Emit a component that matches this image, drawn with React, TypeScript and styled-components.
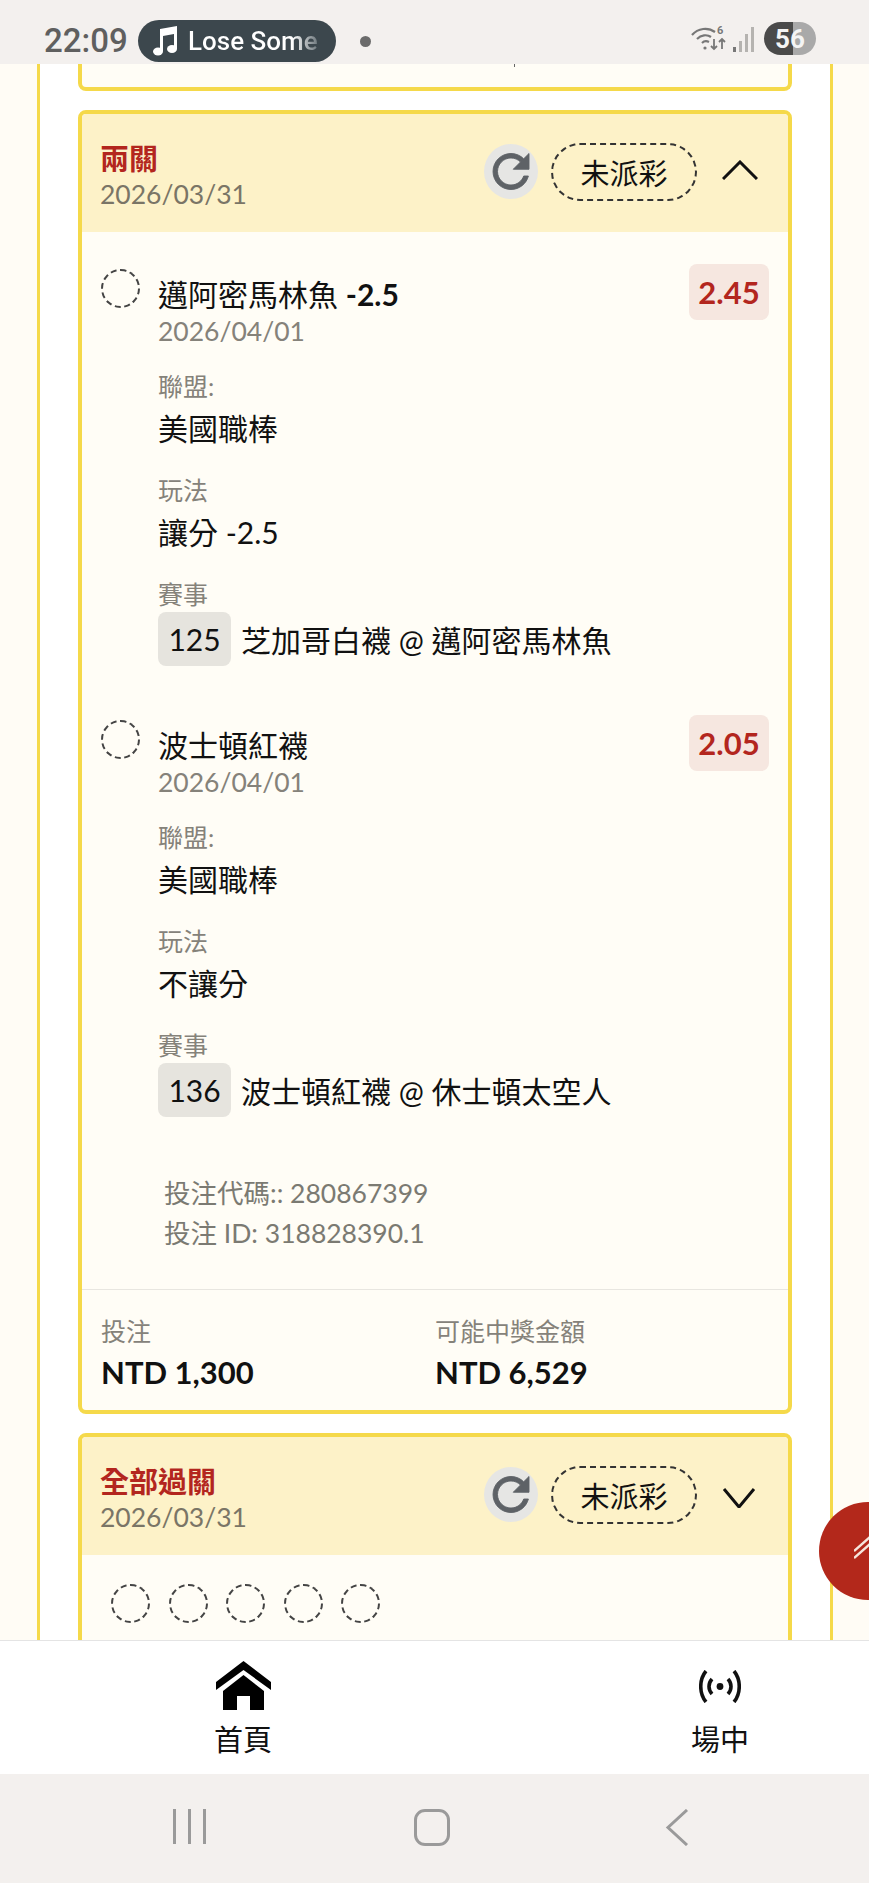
import styled, { createGlobalStyle } from "styled-components";

const GlobalStyle = createGlobalStyle`
    html, body {
        margin: 0;
        padding: 0;
        background: #fffcf5;
        font-family: Lato, "Noto Sans CJK TC", sans-serif;
    }
    * {
        box-sizing: border-box;
    }
`;

const Screen = styled.div`
    position: relative;
    width: 869px;
    height: 1883px;
    display: flex;
    flex-direction: column;
    overflow: hidden;
    background: #fffcf5;
`;

// Phone status bar
const StatusBar = styled.div`
    height: 64px;
    flex: none;
    display: flex;
    align-items: flex-start;
    padding: 20px 53px 0 44px;
    background: #f3f0ee;
`;

const Clock = styled.div`
    width: 94px;
    font-family: Roboto, sans-serif;
    font-size: 33px;
    font-weight: 500;
    line-height: 42px;
    color: #5f5f5f;
`;

const MediaPill = styled.div`
    width: 198px;
    height: 42px;
    display: flex;
    align-items: center;
    gap: 11px;
    padding-left: 15px;
    border-radius: 21px;
    background: #3c474d;
`;

const MediaText = styled.span`
    font-family: Roboto, sans-serif;
    font-size: 26px;
    font-weight: 500;
    background: linear-gradient(90deg, #ffffff 80%, #6d777c 100%);
    -webkit-background-clip: text;
    background-clip: text;
    color: transparent;
`;

const StatusDot = styled.div`
    width: 11px;
    height: 11px;
    margin: 16px 0 0 24px;
    border-radius: 50%;
    background: #6b6b6b;
`;

const StatusRight = styled.div`
    margin-left: auto;
    height: 37px;
    display: flex;
    align-items: center;
    gap: 7px;
`;

const Battery = styled.div`
    width: 52px;
    height: 33px;
    display: flex;
    align-items: center;
    justify-content: center;
    border-radius: 17px;
    background: linear-gradient(90deg, #4a4a4a 56%, #a9a9a9 56%);
    color: #f4f4f4;
    font-family: Roboto, sans-serif;
    font-size: 26px;
    font-weight: 700;
`;

// Scrolling page area
const Content = styled.div`
    flex: 1;
    min-height: 0;
    overflow: hidden;
    padding: 0 36px 0 37px;
`;

const OuterPanel = styled.div`
    min-height: 100%;
    display: flex;
    flex-direction: column;
    gap: 19px;
    padding: 0 38px;
    border-left: 3px solid #f5d94a;
    border-right: 3px solid #f5d94a;
    background: #ffffff;
`;

const CardStub = styled.div`
    height: 27px;
    padding-left: 432px;
    border: 4px solid #f5d94a;
    border-top: none;
    border-radius: 0 0 8px 8px;
    background: #fffdf6;
`;

const StubTick = styled.div`
    width: 1px;
    height: 3px;
    background: #666;
`;

const Card = styled.div`
    border: 4px solid #f5d94a;
    border-radius: 8px;
    background: #fffdf6;
    overflow: hidden;
`;

const CardHeader = styled.div`
    height: 118px;
    display: flex;
    align-items: center;
    padding: 0 30px 2px 18px;
    background: #fdf2c8;
`;

const HeaderTitles = styled.div`
    flex: 1;
    padding-top: 4px;
`;

const BetType = styled.div`
    padding-top: 6px;
    font-size: 29px;
    font-weight: 700;
    line-height: 34px;
    color: #b3261e;
`;

const HeaderDate = styled.div`
    font-size: 26.5px;
    line-height: 36px;
    color: #7a7566;
`;

const RefreshButton = styled.div`
    width: 54px;
    height: 55px;
    margin-top: -2px;
    display: flex;
    align-items: center;
    justify-content: center;
    border-radius: 50%;
    background: #e6e6e4;
`;

const StatusPill = styled.div`
    width: 146px;
    height: 58px;
    display: flex;
    align-items: center;
    justify-content: center;
    margin: 0 25px 0 13px;
    border: 2px dashed #333;
    border-radius: 29px;
    font-size: 29px;
    color: #111;
`;

const ChevronBox = styled.div<{ $up: boolean }>`
    height: 20px;
    margin-top: ${({ $up }) => ($up ? "-4px" : "6px")};
`;

const CardBody = styled.div`
    padding: 44px 19px 0 19px;
`;

const LegList = styled.div`
    display: flex;
    flex-direction: column;
    gap: 61px;
`;

const Leg = styled.div`
    display: flex;
    align-items: flex-start;
    gap: 18px;
`;

const DashedCircle = styled.div`
    width: 39px;
    height: 39px;
    flex: none;
    border: 2px dashed #444;
    border-radius: 50%;
`;

const LegMarker = styled(DashedCircle)`
    margin-top: -7px;
`;

const LegMain = styled.div`
    flex: 1;
`;

const LegTitleRow = styled.div`
    display: flex;
    justify-content: space-between;
    align-items: flex-start;
`;

const LegTitle = styled.div`
    font-size: 30px;
    line-height: 36px;
    color: #111;

    b {
        font-weight: 700;
    }
`;

const OddsBadge = styled.div`
    width: 80px;
    height: 56px;
    margin: -12px 0 -8px;
    display: flex;
    align-items: center;
    justify-content: center;
    border-radius: 8px;
    background: #f6e7e0;
    color: #b3261e;
    font-size: 31px;
    font-weight: 700;
`;

const LegDate = styled.div`
    font-size: 26.5px;
    line-height: 38px;
    color: #85827a;
`;

const Field = styled.div`
    margin-top: 18px;

    & + & {
        margin-top: 24px;
    }
`;

const FieldLabel = styled.div`
    font-size: 25px;
    line-height: 36px;
    color: #85827a;
`;

const FieldValue = styled.div`
    margin-top: 4px;
    font-size: 30px;
    line-height: 40px;
    color: #111;
`;

const MatchRow = styled.div`
    display: flex;
    align-items: center;
    gap: 10px;
    font-size: 30px;
    color: #111;
`;

const MatchNumber = styled.div`
    width: 73px;
    height: 54px;
    display: flex;
    align-items: center;
    justify-content: center;
    border-radius: 8px;
    background: #e6e4de;
`;

const MetaBlock = styled.div`
    margin-top: 56px;
    padding: 0 0 36px 63px;
    font-size: 26.5px;
    line-height: 40px;
    color: #7b7a72;
`;

const CardFooter = styled.div`
    display: grid;
    grid-template-columns: 334px 1fr;
    padding: 23px 19px 18px;
    border-top: 1px solid #e8e6e0;
`;

const FooterLabel = styled.div`
    font-size: 25px;
    line-height: 36px;
    color: #85827a;
`;

const FooterAmount = styled.div`
    margin-top: 3px;
    font-size: 31px;
    font-weight: 700;
    line-height: 40px;
    color: #111;
`;

const CircleRow = styled.div`
    display: flex;
    gap: 18.5px;
    padding: 29px 0 60px 29px;
`;

// Fixed bottom tabs
const BottomNav = styled.div`
    height: 134px;
    flex: none;
    display: flex;
    justify-content: space-between;
    padding: 0 120px 0 214px;
    border-top: 1px solid #e4e4e4;
    background: #ffffff;
`;

const NavItem = styled.div`
    width: 58px;
    height: 100%;
    display: flex;
    flex-direction: column;
    align-items: center;
`;

const NavIconBox = styled.div<{ $inset: number }>`
    height: 61px;
    margin-top: 20px;
    padding-top: ${({ $inset }) => $inset}px;
`;

const NavLabel = styled.div`
    font-size: 29px;
    line-height: 36px;
    white-space: nowrap;
    color: #111;
`;

const SystemNav = styled.div`
    height: 109px;
    flex: none;
    display: flex;
    align-items: flex-start;
    padding: 35px 0 0 173px;
    background: #f3f0ee;
`;

const RecentsIcon = styled.div`
    width: 33px;
    height: 35px;
    display: flex;
    justify-content: space-between;
`;

const RecentsBar = styled.div`
    width: 3px;
    height: 100%;
    background: #9a9a9a;
`;

const HomeOutline = styled.div`
    width: 36px;
    height: 37px;
    margin-left: 208px;
    border: 3px solid #9a9a9a;
    border-radius: 11px;
`;

const BackIcon = styled.div`
    margin-left: 215px;
    height: 37px;
`;

const Fab = styled.div`
    position: absolute;
    left: 819px;
    top: 1502px;
    width: 98px;
    height: 98px;
    display: flex;
    align-items: center;
    padding-left: 35px;
    border-radius: 50%;
    background: #b3281b;
`;

const legs = [
    {
        title: "邁阿密馬林魚",
        line: "-2.5",
        odds: "2.45",
        date: "2026/04/01",
        league: "美國職棒",
        play: "讓分 -2.5",
        num: "125",
        match: "芝加哥白襪 @ 邁阿密馬林魚",
    },
    {
        title: "波士頓紅襪",
        line: "",
        odds: "2.05",
        date: "2026/04/01",
        league: "美國職棒",
        play: "不讓分",
        num: "136",
        match: "波士頓紅襪 @ 休士頓太空人",
    },
];

const RefreshIcon = () => (
    <svg width="57" height="57" viewBox="0 0 24 24" fill="#5e6266" stroke="#5e6266" strokeWidth="0.4">
        <path d="M17.65 6.35C16.2 4.9 14.21 4 12 4c-4.42 0-7.99 3.58-7.99 8s3.57 8 7.99 8c3.73 0 6.84-2.55 7.73-6h-2.08c-.82 2.33-3.04 4-5.65 4-3.31 0-6-2.69-6-6s2.69-6 6-6c1.66 0 3.14.69 4.22 1.78L13 11h7V4l-2.35 2.35z" />
    </svg>
);

const Chevron = ({ up }: { up: boolean }) => (
    <ChevronBox $up={up}>
        <svg width="36" height="20" viewBox="0 0 36 20" fill="none" stroke="#111" strokeWidth="3">
            <path d={up ? "M1 19L18 2l17 17" : "M2 1l15 18L32 1"} />
        </svg>
    </ChevronBox>
);

const BetHeader = ({ type, up }: { type: string; up: boolean }) => (
    <CardHeader>
        <HeaderTitles>
            <BetType>{type}</BetType>
            <HeaderDate>2026/03/31</HeaderDate>
        </HeaderTitles>
        <RefreshButton>
            <RefreshIcon />
        </RefreshButton>
        <StatusPill>未派彩</StatusPill>
        <Chevron up={up} />
    </CardHeader>
);

export default function App() {
    return (
        <Screen>
            <GlobalStyle />
            <StatusBar>
                <Clock>22:09</Clock>
                <MediaPill>
                    <svg width="24" height="30" viewBox="0 0 24 30" fill="#fff">
                        <ellipse cx="5" cy="25.5" rx="5" ry="4" />
                        <ellipse cx="19" cy="23" rx="5" ry="4" />
                        <path d="M7 25V3l17-3v23h-3V8L10 10v15z" />
                    </svg>
                    <MediaText>Lose Some</MediaText>
                </MediaPill>
                <StatusDot />
                <StatusRight>
                    <svg width="35" height="28" viewBox="0 0 35 28" fill="none" stroke="#777" strokeWidth="2.2">
                        <path d="M1 10C7 3 17 2 24 7M6 14c4-4 10-5 14-2M11 18c2-2 5-2 7-1" />
                        <circle cx="14" cy="23" r="1.6" fill="#777" stroke="none" />
                        <path d="M23 14v10m-3-3l3 3 3-3M31 24V14m-3 3l3-3 3 3" strokeWidth="1.8" />
                        <text x="26" y="9" fontSize="11" fontWeight="700" fill="#777" stroke="none" fontFamily="Roboto, sans-serif">6</text>
                    </svg>
                    <svg width="24" height="28" viewBox="0 0 24 28" fill="#b5b3b0">
                        <rect x="0" y="22" width="3" height="5" fill="#777" />
                        <rect x="6" y="16" width="3" height="11" />
                        <rect x="12" y="9" width="3" height="18" />
                        <rect x="18" y="2" width="3" height="25" />
                    </svg>
                    <Battery>56</Battery>
                </StatusRight>
            </StatusBar>

            <Content>
                <OuterPanel>
                    <CardStub>
                        <StubTick />
                    </CardStub>

                    <Card>
                        <BetHeader type="兩關" up />
                        <CardBody>
                            <LegList>
                                {legs.map((leg) => (
                                    <Leg key={leg.num}>
                                        <LegMarker />
                                        <LegMain>
                                            <LegTitleRow>
                                                <LegTitle>
                                                    {leg.title} <b>{leg.line}</b>
                                                </LegTitle>
                                                <OddsBadge>{leg.odds}</OddsBadge>
                                            </LegTitleRow>
                                            <LegDate>{leg.date}</LegDate>
                                            <Field>
                                                <FieldLabel>聯盟:</FieldLabel>
                                                <FieldValue>{leg.league}</FieldValue>
                                            </Field>
                                            <Field>
                                                <FieldLabel>玩法</FieldLabel>
                                                <FieldValue>{leg.play}</FieldValue>
                                            </Field>
                                            <Field>
                                                <FieldLabel>賽事</FieldLabel>
                                                <MatchRow>
                                                    <MatchNumber>{leg.num}</MatchNumber>
                                                    {leg.match}
                                                </MatchRow>
                                            </Field>
                                        </LegMain>
                                    </Leg>
                                ))}
                            </LegList>
                            <MetaBlock>
                                <div>投注代碼:: 280867399</div>
                                <div>投注 ID: 318828390.1</div>
                            </MetaBlock>
                        </CardBody>
                        <CardFooter>
                            <div>
                                <FooterLabel>投注</FooterLabel>
                                <FooterAmount>NTD 1,300</FooterAmount>
                            </div>
                            <div>
                                <FooterLabel>可能中獎金額</FooterLabel>
                                <FooterAmount>NTD 6,529</FooterAmount>
                            </div>
                        </CardFooter>
                    </Card>

                    <Card>
                        <BetHeader type="全部過關" up={false} />
                        <CircleRow>
                            {[1, 2, 3, 4, 5].map((n) => (
                                <DashedCircle key={n} />
                            ))}
                        </CircleRow>
                    </Card>
                </OuterPanel>
            </Content>

            <BottomNav>
                <NavItem>
                    <NavIconBox $inset={0}>
                        <svg width="55" height="49" viewBox="0 0 55 49" fill="#000">
                            <path d="M27.5 0L55 21v8L27.5 9 0 29v-8z" />
                            <path d="M7 30l20.500-16L48 30v19H34V35H21v14H7z" />
                        </svg>
                    </NavIconBox>
                    <NavLabel>首頁</NavLabel>
                </NavItem>
                <NavItem>
                    <NavIconBox $inset={9}>
                        <svg width="42" height="33" viewBox="0 0 42 33" fill="none" stroke="#111" strokeWidth="3.6">
                            <circle cx="21" cy="16.500" r="3.4" fill="#111" stroke="none" />
                            <path d="M13 9c-4 4.500-4 10.500 0 15M29 9c4 4.500 4 10.500 0 15" />
                            <path d="M7 1C0 9.500 0 23.500 7 32M35 1c7 8.500 7 22.500 0 31" />
                        </svg>
                    </NavIconBox>
                    <NavLabel>場中</NavLabel>
                </NavItem>
            </BottomNav>

            <SystemNav>
                <RecentsIcon>
                    <RecentsBar />
                    <RecentsBar />
                    <RecentsBar />
                </RecentsIcon>
                <HomeOutline />
                <BackIcon>
                    <svg width="24" height="37" viewBox="0 0 24 37" fill="none" stroke="#9a9a9a" strokeWidth="3">
                        <path d="M22 1L3 18.5 22 36" />
                    </svg>
                </BackIcon>
            </SystemNav>

            <Fab>
                <svg width="16" height="30" viewBox="0 0 16 30" fill="none" stroke="#f6e6dd" strokeWidth="2.4">
                    <path d="M0 15L16 1M0 22L16 8" />
                </svg>
            </Fab>
        </Screen>
    );
}
